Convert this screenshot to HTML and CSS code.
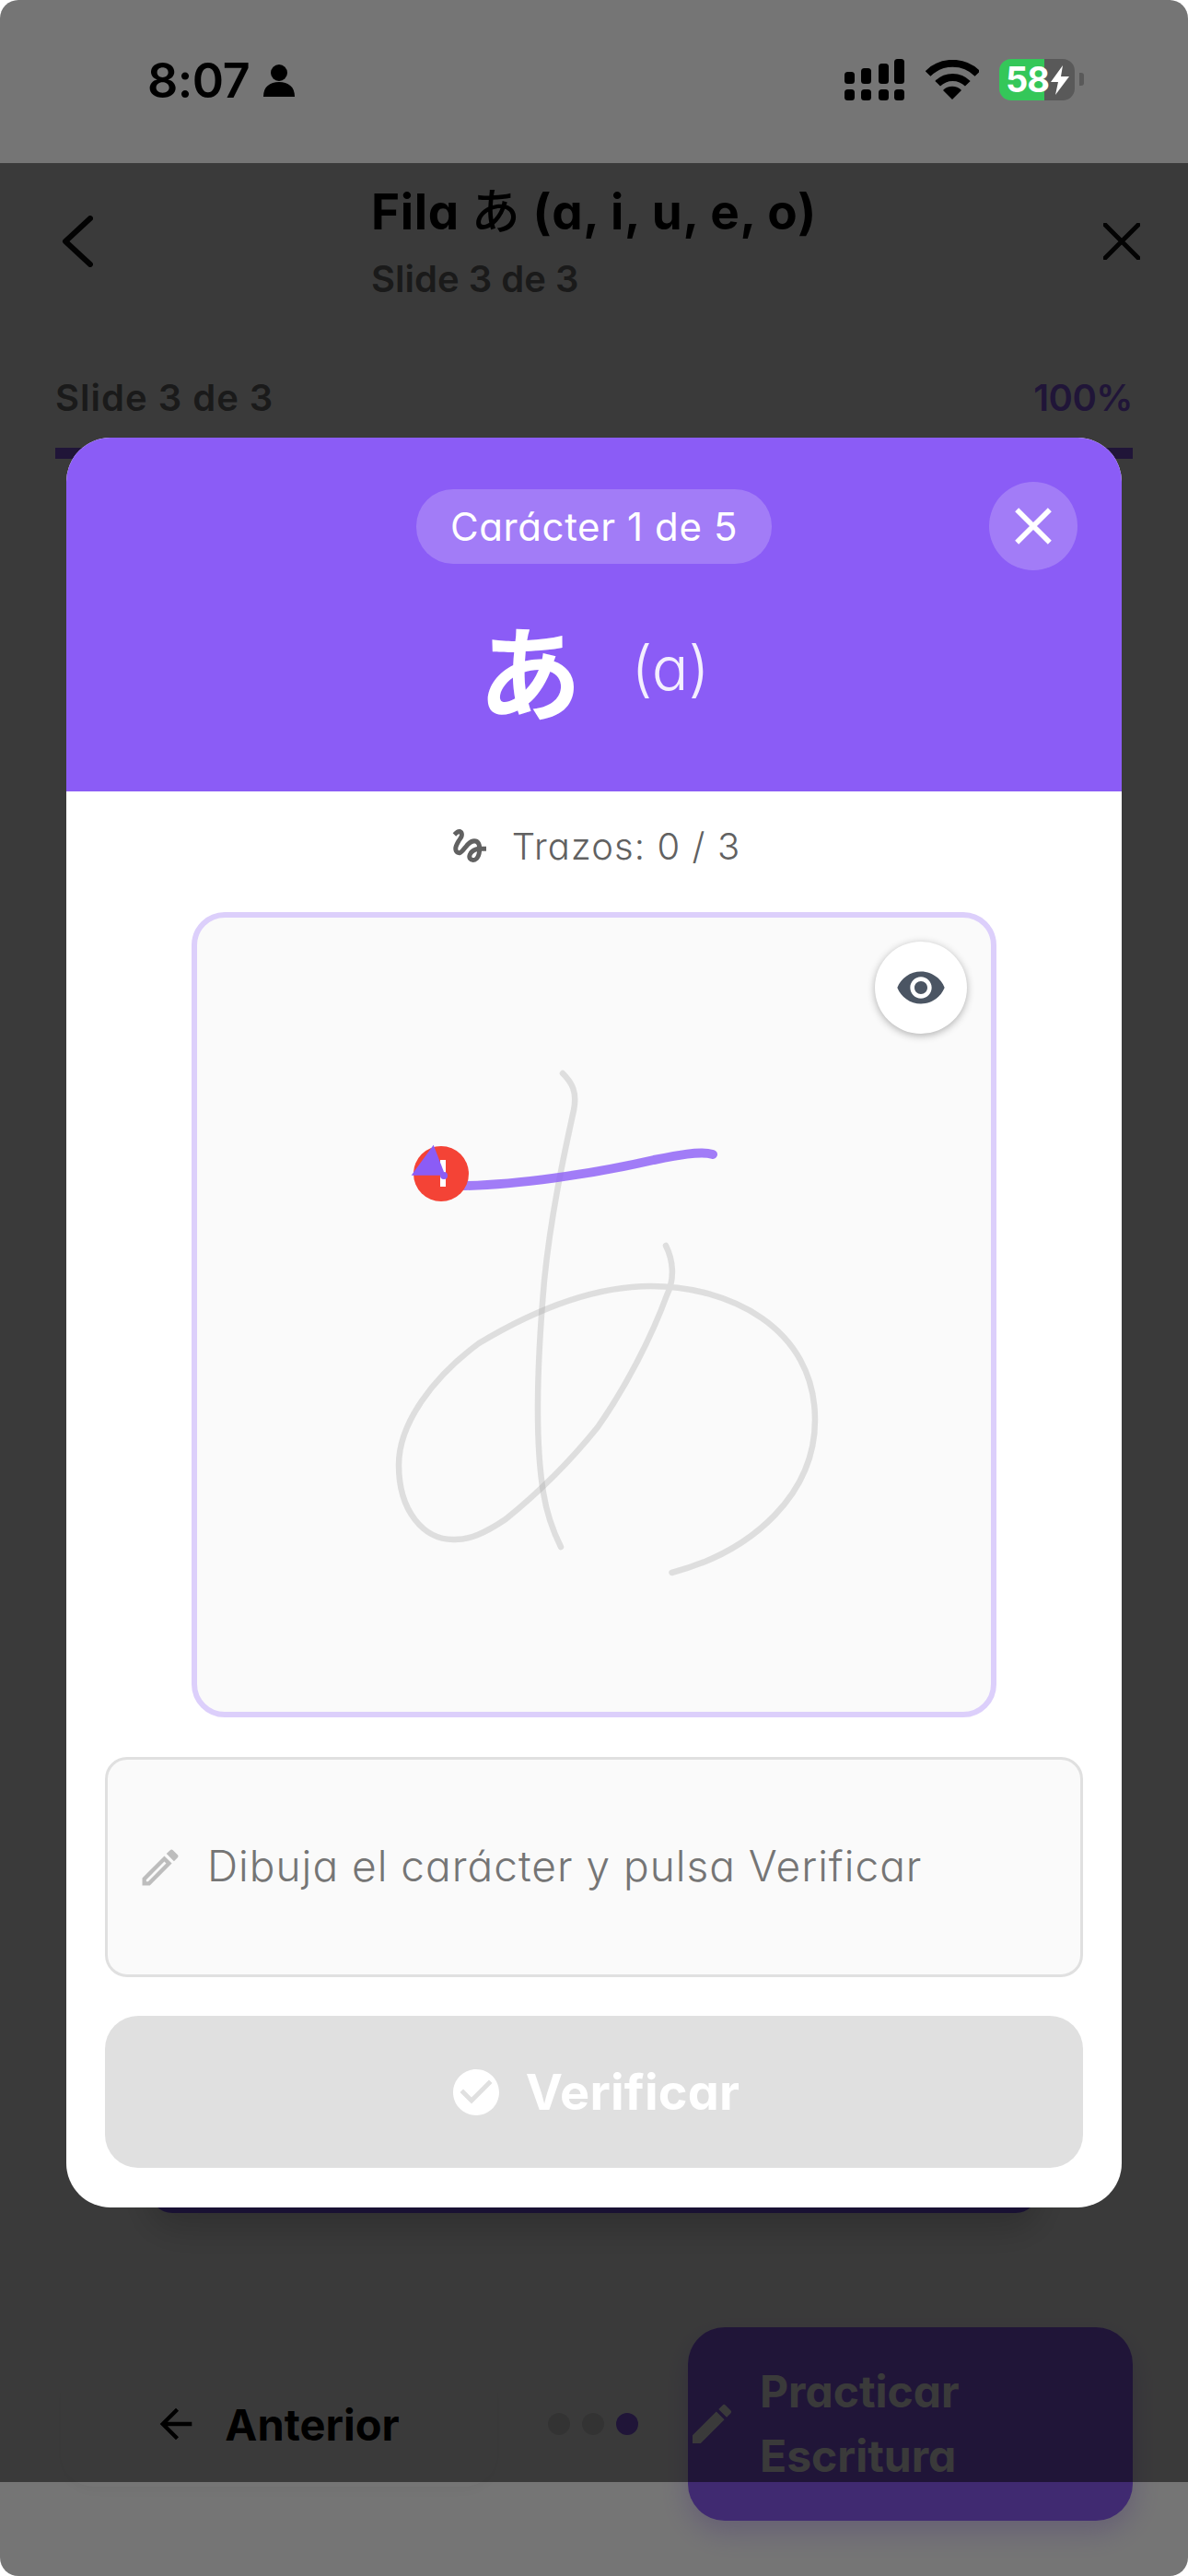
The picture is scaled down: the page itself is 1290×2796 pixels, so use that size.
FILE: index.html
```html
<!DOCTYPE html>
<html lang="es">
<head>
  <meta charset="UTF-8" />
  <meta name="viewport" content="width=device-width, initial-scale=1.0" />
  <title>Fila あ</title>
  <link rel="stylesheet" href="styles.css">
</head>
<body>
  <div class="screen">
    <div class="status-bar">
      <div class="status-left">
        <span class="clock">8:07</span>
        <svg class="person" viewBox="0 0 36 36"><circle cx="18" cy="10" r="9"/><path d="M1 36c0-11 7-16 17-16s17 5 17 16z"/></svg>
      </div>
      <div class="status-right">
        <svg class="signal" viewBox="0 0 66 46">
          <rect x="0" y="33" width="11" height="12" rx="3.5"/><rect x="18" y="33" width="11" height="12" rx="3.5"/><rect x="37" y="33" width="11" height="12" rx="3.5"/><rect x="54" y="33" width="11" height="12" rx="3.5"/>
          <rect x="0" y="14" width="11" height="13" rx="3.5"/><rect x="18" y="10" width="11" height="17" rx="3.5"/><rect x="37" y="5" width="11" height="22" rx="3.5"/><rect x="54" y="0" width="11" height="27" rx="3.5"/>
        </svg>
        <svg class="wifi" viewBox="0 0 58 44">
          <path d="M2.600 15A38 38 0 0 1 56.400 15M13.200 25.700A23 23 0 0 1 45.800 25.700" fill="none" stroke="#000" stroke-width="8"/>
          <path d="M29 43 19 33A14 14 0 0 1 39 33z"/>
        </svg>
        <div class="battery">
          <span class="battery-text">58</span>
          <svg class="bolt" viewBox="0 0 20 32"><path d="M13 0 0 18h8l-3 14L20 12h-9z"/></svg>
        </div>
        <div class="battery-nub"></div>
      </div>
    </div>

    <header class="appbar">
      <svg class="back" viewBox="0 0 34 56"><path d="M31 3 4 28l27 25"/></svg>
      <div class="appbar-title">
        <div class="title">Fila <span class="jp">あ</span> (a, i, u, e, o)</div>
        <div class="subtitle">Slide 3 de 3</div>
      </div>
      <svg class="exit" viewBox="0 0 40 40"><path d="M2 2l36 36M38 2 2 38"/></svg>
    </header>

    <div class="progress">
      <div class="progress-row">
        <span class="progress-label">Slide 3 de 3</span>
        <span class="percent">100%</span>
      </div>
      <div class="progress-bar"></div>
    </div>

    <div class="slide-card"></div>

    <footer class="footer">
      <div class="prev-btn">
        <svg viewBox="0 0 24 24"><path d="M20 11H7.830l5.590-5.590L12 4l-8 8 8 8 1.410-1.410L7.830 13H20v-2z"/></svg>
        <span>Anterior</span>
      </div>
      <div class="dots">
        <span class="dot"></span>
        <span class="dot"></span>
        <span class="dot active"></span>
      </div>
      <div class="practice-btn">
        <svg viewBox="0 0 24 24"><path d="M3 17.250V21h3.750L17.810 9.940l-3.750-3.750L3 17.250zM20.710 7.040a1 1 0 0 0 0-1.410l-2.340-2.340a1 1 0 0 0-1.410 0l-1.830 1.830 3.750 3.750 1.830-1.830z"/></svg>
        <span>Practicar<br>Escritura</span>
      </div>
    </footer>

    <div class="dim"></div>
    <div class="overlay">
      <div class="modal">
        <div class="modal-head">
          <div class="pill">Carácter 1 de 5</div>
          <div class="close-btn">
            <svg viewBox="0 0 24 24"><path d="M19 6.410 17.590 5 12 10.590 6.410 5 5 6.410 10.590 12 5 17.590 6.410 19 12 13.410 17.590 19 19 17.590 13.410 12z"/></svg>
          </div>
          <div class="char-row">
            <span class="char">あ</span>
            <span class="romaji">(a)</span>
          </div>
        </div>
        <div class="modal-body">
          <div class="strokes">
            <svg viewBox="0 0 24 24"><path d="M4.590 6.890c.7-.71 1.400-1.350 1.710-1.220.5.2 0 1.030-.3 1.520-.25.42-2.860 3.890-2.860 6.310 0 1.280.48 2.340 1.340 2.980.75.56 1.740.73 2.640.46 1.070-.31 1.950-1.400 3.060-2.770 1.210-1.490 2.830-3.440 4.080-3.440 1.630 0 1.650 1.010 1.760 1.790-3.780.64-5.380 3.670-5.380 5.370 0 1.700 1.440 3.090 3.210 3.090 1.630 0 4.290-1.330 4.690-6.100H21v-2.500h-2.470c-.15-1.650-1.090-4.200-4.030-4.200-2.250 0-4.180 1.910-4.940 2.840-.58.73-2.060 2.480-2.290 2.720-.25.3-.68.84-1.110.84-.45 0-.72-.83-.36-1.920.35-1.090 1.400-2.860 1.850-3.520.78-1.140 1.300-1.920 1.300-3.280C8.950 3.690 7.310 3 6.440 3 5.120 3 3.970 4 3.720 4.250c-.36.36-.66.66-.88.93l1.750 1.710zm9.290 11.660c-.31 0-.74-.26-.74-.72 0-.6.73-2.200 2.870-2.760-.3 2.690-1.430 3.480-2.130 3.480z"/></svg>
            <span>Trazos: 0 / 3</span>
          </div>
          <div class="canvas">
            <svg class="drawing" viewBox="214 996 862 862">
              <g class="guide">
                <path d="M611 1165C621 1175 627 1185 623 1205C612 1255 598 1320 591 1390C584 1470 580 1560 590 1620C594 1645 601 1663 609 1679"/>
                <path d="M723 1352C731 1368 733 1388 724 1406C708 1450 680 1505 649 1549C620 1585 585 1620 549 1649C525 1665 510 1671 494 1671C460 1672 433 1640 433 1590C433 1545 470 1495 520 1458C575 1425 640 1396 707 1396C790 1396 885 1440 885 1541C885 1620 820 1683 729.500 1707"/>
              </g>
              <path class="ink" d="M504 1287C560 1286 640 1275 710 1259C735 1254 760 1249 774 1253"/>
              <circle class="start" cx="479" cy="1274" r="30"/>
              <rect x="478" y="1259" width="6" height="29" fill="#fff"/>
              <path class="arrow" d="M470.700 1242.700 446.700 1275.700H478L482 1272z"/>
              <circle class="arrow" cx="482" cy="1276" r="4"/>
            </svg>
            <div class="eye-btn">
              <svg viewBox="0 0 24 24"><path d="M12 4.500C7 4.500 2.730 7.610 1 12c1.730 4.390 6 7.500 11 7.500s9.270-3.110 11-7.500c-1.730-4.390-6-7.500-11-7.500zM12 17c-2.760 0-5-2.240-5-5s2.240-5 5-5 5 2.240 5 5-2.240 5-5 5zm0-8c-1.660 0-3 1.340-3 3s1.340 3 3 3 3-1.340 3-3-1.340-3-3-3z"/></svg>
            </div>
          </div>
          <div class="hint">
            <svg viewBox="0 0 24 24"><path d="M14.060 9.020l.92.92L5.920 19H5v-.92l9.060-9.060M17.660 3c-.25 0-.51.1-.7.29l-1.830 1.830 3.750 3.750 1.830-1.830c.39-.39.39-1.020 0-1.410l-2.340-2.340c-.2-.2-.45-.29-.71-.29zm-3.600 3.190L3 17.250V21h3.750L17.810 9.940l-3.750-3.750z"/></svg>
            <span class="hint-text">Dibuja el carácter y pulsa Verificar</span>
          </div>
          <div class="verify-btn">
            <svg viewBox="0 0 24 24"><path d="M12 2C6.480 2 2 6.480 2 12s4.480 10 10 10 10-4.480 10-10S17.520 2 12 2zm-2 15l-5-5 1.410-1.410L10 14.170l7.590-7.590L19 8l-9 9z"/></svg>
            <span>Verificar</span>
          </div>
        </div>
      </div>
    </div>
  </div>
</body>
</html>
```

FILE: styles.css
```css
* {
  box-sizing: border-box;
}
body {
  margin: 0;
  background: #fff;
  font-family: Inter, "Noto Sans CJK JP", sans-serif;
  font-feature-settings: "cv11";
}
.screen {
  position: relative;
  width: 1290px;
  height: 2796px;
  background: #fff;
  border-radius: 20px;
  overflow: hidden;
  display: flex;
  flex-direction: column;
}

/* status bar sits above the dim layers */
.status-bar {
  position: relative;
  z-index: 5;
  height: 177px;
  flex: none;
  display: flex;
  justify-content: space-between;
  padding: 0 113px 0 160px;
}
.status-left {
  display: flex;
  align-items: center;
  gap: 14px;
  height: 174px;
}
.clock {
  font-size: 52px;
  font-weight: 600;
  color: #000;
  letter-spacing: -0.5px;
}
.person {
  width: 36px;
  height: 36px;
}
.status-right {
  position: relative;
  display: flex;
  align-items: flex-start;
  padding-top: 64px;
}
.signal {
  width: 66px;
  height: 46px;
  margin-right: 22px;
}
.wifi {
  width: 58px;
  height: 44px;
  margin-top: 1px;
  margin-right: 22px;
}
.battery {
  width: 82px;
  height: 45px;
  border-radius: 13px;
  background: linear-gradient(to right, #34c759 49px, #595959 49px);
  display: flex;
  align-items: center;
  padding-left: 7px;
}
.battery-text {
  font-size: 38px;
  line-height: 45px;
  font-weight: 700;
  color: #fff;
  letter-spacing: -1px;
}
.bolt {
  width: 20px;
  height: 32px;
  margin-left: 2px;
  flex: none;
  fill: #fff;
}
.battery-nub {
  width: 5px;
  height: 14px;
  margin: 15px 0 0 5px;
  border-radius: 0 3px 3px 0;
  background: #595959;
}

.appbar {
  flex: none;
  display: grid;
  grid-template-columns: 1fr auto 1fr;
  align-items: center;
  padding: 14px 52px 0;
}
.back {
  width: 34px;
  height: 56px;
  margin-left: 15px;
  fill: none;
  stroke: #111;
  stroke-width: 6;
  stroke-linecap: round;
  stroke-linejoin: round;
}
.exit {
  width: 40px;
  height: 40px;
  justify-self: end;
  fill: none;
  stroke: #111;
  stroke-width: 5;
  stroke-linecap: round;
}
.title {
  font-size: 53px;
  font-weight: 700;
  line-height: 78px;
  letter-spacing: 0.6px;
  color: #000;
}
.title .jp {
  font-weight: 500;
}
.subtitle {
  margin-top: 4px;
  font-size: 40px;
  font-weight: 600;
  line-height: 60px;
  color: #757575;
}

.progress {
  flex: none;
  margin-top: 69px;
  padding: 0 60px;
}
.progress-row {
  display: flex;
  justify-content: space-between;
  font-size: 40px;
  font-weight: 600;
  line-height: 60px;
  color: #757575;
}
.progress-label {
  letter-spacing: 1px;
}
.percent {
  letter-spacing: -0.5px;
  color: #8b5cf6;
}
.progress-bar {
  height: 12px;
  margin-top: 24px;
  background: #8b5cf6;
}

.slide-card {
  flex: 1;
  margin: 40px 163px 124px;
  border-radius: 24px;
  background: #6f4ee0;
  box-shadow: 0 16px 40px rgba(0,0,0,0.2);
}

.footer {
  flex: none;
  display: flex;
  align-items: center;
  padding: 0 60px 60px;
}
.prev-btn {
  width: 474px;
  height: 135px;
  margin-left: 6px;
  padding-right: 7px;
  display: flex;
  align-items: center;
  justify-content: center;
  gap: 27px;
  border-radius: 36px;
  background: #fff;
  box-shadow: 0 4px 16px rgba(0,0,0,0.04);
  font-size: 47px;
  font-weight: 700;
  color: #000;
}
.prev-btn svg {
  width: 52px;
  height: 52px;
}
.dots {
  flex: 1;
  display: flex;
  justify-content: center;
  gap: 13px;
}
.dot {
  width: 24px;
  height: 24px;
  border-radius: 50%;
  background: #e0e0e0;
}
.dot.active {
  background: #8b5cf6;
}
.practice-btn {
  width: 483px;
  height: 210px;
  display: flex;
  align-items: center;
  gap: 24px;
  border-radius: 40px;
  background: #8b5cf6;
  box-shadow: 0 12px 30px rgba(139,92,246,0.3);
  font-size: 48px;
  font-weight: 700;
  line-height: 70px;
  color: #fff;
}
.practice-btn svg {
  width: 56px;
  height: 56px;
  margin-left: -2px;
  fill: #fff;
}

.dim {
  position: absolute;
  inset: 0;
  background: rgba(0,0,0,0.54);
}
.overlay {
  position: absolute;
  left: 0;
  right: 0;
  top: 177px;
  bottom: 102px;
  background: rgba(0,0,0,0.5);
  display: flex;
  align-items: center;
  justify-content: center;
}
.modal {
  width: 1146px;
  height: 1921px;
  border-radius: 48px;
  background: #fff;
  overflow: hidden;
}
.modal-head {
  position: relative;
  height: 384px;
  padding-top: 56px;
  background: #8b5cf6;
  display: flex;
  flex-direction: column;
  align-items: center;
}
.pill {
  height: 81px;
  width: 386px;
  display: flex;
  align-items: center;
  justify-content: center;
  border-radius: 40px;
  background: rgba(255,255,255,0.2);
  font-size: 42px;
  font-weight: 400;
  letter-spacing: 0.6px;
  color: #fff;
}
.close-btn {
  position: absolute;
  top: 48px;
  right: 48px;
  width: 96px;
  height: 96px;
  display: flex;
  align-items: center;
  justify-content: center;
  border-radius: 50%;
  background: rgba(255,255,255,0.2);
}
.close-btn svg {
  width: 68px;
  height: 68px;
  fill: #fff;
}
.char-row {
  display: flex;
  align-items: center;
  gap: 54px;
  height: 140px;
  margin-top: 43px;
}
.char {
  font-size: 112px;
  font-weight: 700;
  color: #fff;
}
.romaji {
  font-size: 66px;
  font-weight: 300;
  color: rgba(255,255,255,0.9);
}
.modal-body {
  padding: 30px 42px 0;
  display: flex;
  flex-direction: column;
  align-items: center;
}
.strokes {
  height: 58px;
  display: flex;
  align-items: center;
  gap: 22px;
  font-size: 40px;
  font-weight: 300;
  letter-spacing: 1.1px;
  color: #616161;
}
.strokes svg {
  width: 48px;
  height: 48px;
  fill: #616161;
}
.canvas {
  position: relative;
  width: 874px;
  height: 874px;
  margin-top: 43px;
  border: 6px solid #dccffb;
  border-radius: 36px;
  background: #fafafa;
}
.drawing {
  display: block;
  width: 862px;
  height: 862px;
}
.guide path {
  fill: none;
  stroke: rgba(158,158,158,0.3);
  stroke-width: 6.5;
  stroke-linecap: round;
}
.ink {
  fill: none;
  stroke: rgba(139,92,246,0.8);
  stroke-width: 10;
  stroke-linecap: round;
}
.start {
  fill: #f44336;
}
.arrow {
  fill: #8b5cf6;
}
.eye-btn {
  position: absolute;
  top: 26px;
  right: 26px;
  width: 100px;
  height: 100px;
  display: flex;
  align-items: center;
  justify-content: center;
  border-radius: 50%;
  background: #fff;
  box-shadow: 0 2px 8px rgba(0,0,0,0.3);
}
.eye-btn svg {
  width: 56px;
  height: 56px;
  fill: #4b5563;
}
.hint {
  width: 100%;
  height: 239px;
  margin-top: 43px;
  display: flex;
  align-items: center;
  gap: 25px;
  padding-left: 31px;
  border: 3px solid #e0e0e0;
  border-radius: 24px;
  background: #fafafa;
  font-size: 46px;
  font-weight: 300;
  letter-spacing: 1px;
  color: #757575;
}
.hint-text {
  margin-top: -4px;
}
.hint svg {
  width: 52px;
  height: 52px;
  flex: none;
  fill: #bdbdbd;
}
.verify-btn {
  width: 100%;
  height: 165px;
  margin-top: 42px;
  display: flex;
  align-items: center;
  justify-content: center;
  gap: 24px;
  border-radius: 36px;
  background: #e0e0e0;
  font-size: 54px;
  font-weight: 700;
  letter-spacing: 0.2px;
  color: #fff;
}
.verify-btn svg {
  width: 60px;
  height: 60px;
  fill: #fff;
}
```
